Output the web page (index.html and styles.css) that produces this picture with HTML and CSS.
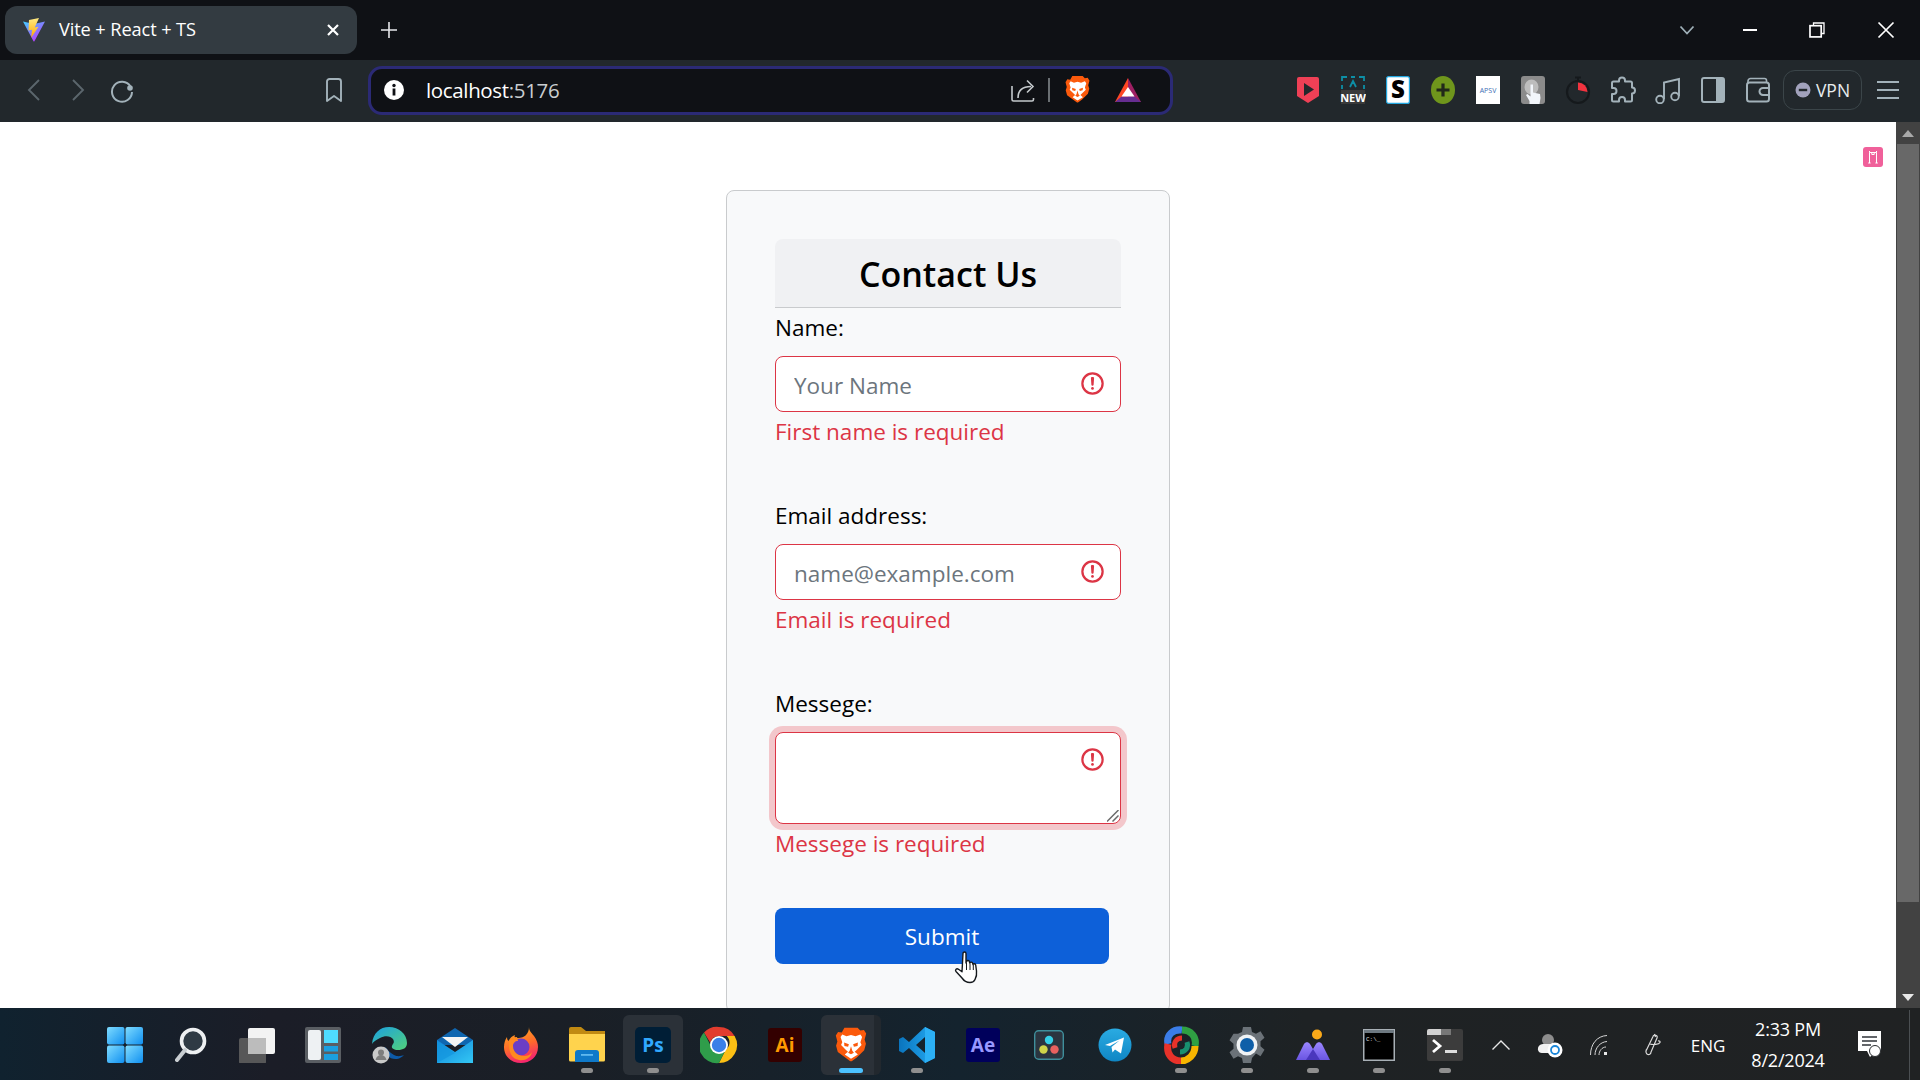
FILE: index.html
```html
<!DOCTYPE html>
<html lang="en">
<head>
<meta charset="utf-8">
<title>Vite + React + TS</title>
<link rel="stylesheet" href="styles.css">
</head>
<body>
<svg class="defs" width="0" height="0" aria-hidden="true">
  <defs>
    <linearGradient id="viteV" x1="0" y1="0" x2="0.7" y2="1"><stop offset="0" stop-color="#41d1ff"/><stop offset="1" stop-color="#bd34fe"/></linearGradient>
    <linearGradient id="viteB" x1="0" y1="0" x2="0" y2="1"><stop offset="0" stop-color="#ffea83"/><stop offset="1" stop-color="#ffa800"/></linearGradient>
    <linearGradient id="winG" x1="0" y1="0" x2="1" y2="1"><stop offset="0" stop-color="#7fdcff"/><stop offset="1" stop-color="#0f8ff0"/></linearGradient>
    <linearGradient id="edgeG" x1="0" y1="0" x2="1" y2="1"><stop offset="0" stop-color="#1ba1e2"/><stop offset="1" stop-color="#52d17a"/></linearGradient>
    <linearGradient id="mailG" x1="0" y1="0" x2="1" y2="1"><stop offset="0" stop-color="#0f83d8"/><stop offset="1" stop-color="#34c8f5"/></linearGradient>
    <linearGradient id="ffG" x1="0" y1="0" x2="0.3" y2="1"><stop offset="0" stop-color="#ffb51f"/><stop offset="0.6" stop-color="#ff6a2b"/><stop offset="1" stop-color="#f5296b"/></linearGradient>
    <linearGradient id="vpG" x1="0" y1="0" x2="1" y2="0"><stop offset="0" stop-color="#0a74bd"/><stop offset="1" stop-color="#23a9f2"/></linearGradient>
    <linearGradient id="monG" x1="0" y1="0" x2="0" y2="1"><stop offset="0" stop-color="#9a86ff"/><stop offset="1" stop-color="#6a55e2"/></linearGradient>
    <linearGradient id="tgG" x1="0" y1="0" x2="0" y2="1"><stop offset="0" stop-color="#2aabe2"/><stop offset="1" stop-color="#0f86c4"/></linearGradient>
    <symbol id="brave" viewBox="0 0 24 28">
      <path fill="#fb5a0c" d="M7 .5h10l2 2.200 2.800-.5 1.700 2.800-1.200 4.500 1 3.200-1.300 4.800-5.600 5.500-3.600 2.700c-.5.4-1.100.4-1.600 0l-3.600-2.700L2 19 .7 14.200l1-3.200L.5 6.500 2.200 3.700 5 4.200z"/>
      <path fill="#fff" d="M12 6l3.400 1 3.700-1.300 1.300 1.800-1.300 4 .9 2.200-3.500 3.500-1.700 1.600 2.400 2.100L12 24l-4.700-3.100 2.400-2.100-1.700-1.600-3.500-3.500.9-2.200-1.300-4 1.300-1.800L8.600 7z"/>
      <path fill="#fb5a0c" d="M6.800 11.800 10.400 13l-.6 2L7 14.300zM17.200 11.800 13.600 13l.6 2 2.800-.7zM12 14.500l1 3.500 1.200 1.500-2.200 1.200-2.200-1.200 1.200-1.500z"/>
    </symbol>
  </defs>
</svg>

<header class="tabstrip">
  <div class="tab">
    <svg class="tab-fav" width="24" height="24" viewBox="0 0 24 24"><path fill="url(#viteV)" d="M1 3.500 12 6l11-2.500L12.400 23.300a.5.5 0 0 1-.9 0z"/><path fill="url(#viteB)" d="M17 0 7 2l-.5 10.500 3.500-.7-.8 8 7.300-11-3.800.7z"/></svg>
    <span class="tab-title">Vite + React + TS</span>
    <svg class="tab-x" width="14" height="14" viewBox="0 0 14 14"><path d="M2 2l10 10M12 2 2 12" stroke="#fff" stroke-width="2.200"/></svg>
  </div>
  <div class="new-tab"><svg width="18" height="18" viewBox="0 0 18 18"><path d="M9 1v16M1 9h16" stroke="#e6e8ea" stroke-width="1.600"/></svg></div>
  <div class="strip-fill"></div>
  <div class="win-chev"><svg width="16" height="10" viewBox="0 0 16 10"><path d="M1.500 1.500 8 8.500l6.500-7" fill="none" stroke="#9fb0b8" stroke-width="1.800"/></svg></div>
  <div class="win-btn win-min"><svg width="16" height="16" viewBox="0 0 16 16"><path d="M1 8h14" stroke="#fff" stroke-width="2"/></svg></div>
  <div class="win-btn win-max"><svg width="16" height="16" viewBox="0 0 16 16"><path d="M4.500 3.500V1h10.500v10.500h-2.500" fill="none" stroke="#fff" stroke-width="1.300"/><rect x="1" y="3.700" width="11.200" height="11.200" fill="none" stroke="#fff" stroke-width="1.700"/></svg></div>
  <div class="win-btn win-close"><svg width="18" height="18" viewBox="0 0 18 18"><path d="M1.500 1.500l15 15M16.500 1.500l-15 15" stroke="#fff" stroke-width="1.700"/></svg></div>
</header>

<nav class="toolbar">
  <div class="slot"><svg width="16" height="26" viewBox="0 0 16 26"><path d="M13 3 3 13l10 10" fill="none" stroke="#5b666d" stroke-width="1.900"/></svg></div>
  <div class="slot"><svg width="16" height="26" viewBox="0 0 16 26"><path d="M3 3l10 10L3 23" fill="none" stroke="#5b666d" stroke-width="1.900"/></svg></div>
  <div class="slot"><svg width="26" height="26" viewBox="0 0 26 26"><path d="M21.500 9.500A10 10 0 1 0 23 15" fill="none" stroke="#a3b2ba" stroke-width="2"/><circle cx="21" cy="11" r="2.800" fill="#a3b2ba"/></svg></div>
  <div class="slot bookmark"><svg width="20" height="26" viewBox="0 0 20 26"><path d="M3 24V4.500a2.500 2.500 0 0 1 2.500-2.500h9a2.500 2.500 0 0 1 2.500 2.500V24l-7-5z" fill="none" stroke="#a3b2ba" stroke-width="1.900" stroke-linejoin="round"/></svg></div>
  <div class="address">
    <svg class="addr-info" width="22" height="22" viewBox="0 0 22 22"><circle cx="11" cy="11" r="10" fill="#fff"/><rect x="9.600" y="9.500" width="2.800" height="7" fill="#0f1115"/><circle cx="11" cy="6.500" r="1.700" fill="#0f1115"/></svg>
    <span class="url"><span class="url-host">localhost</span><span class="url-port">:5176</span></span>
    <svg class="addr-share" width="26" height="26" viewBox="0 0 26 26"><path d="M2 9v13.500c0 1 .6 1.500 1.500 1.500H22c1 0 1.500-.5 1.500-1.500V21" fill="none" stroke="#c4c9cc" stroke-width="1.600"/><path d="M8 21c0-8 4-11.500 13-11.500M17 3.500l6 6-6 6" fill="none" stroke="#c4c9cc" stroke-width="1.600"/></svg>
    <span class="addr-sep"></span>
    <svg class="addr-brave" width="25" height="30" viewBox="0 0 24 28"><use href="#brave"/></svg>
    <svg class="addr-bat" width="28" height="26" viewBox="0 0 28 26"><path fill="#ff4724" d="M14 1 1 25h13z"/><path fill="#9e1f63" d="M14 1l13 24H14z"/><path fill="#662d91" d="M1 25l6.500-5.500h13L27 25z"/><path fill="#fff" d="M14 10 7.500 19.500h13z"/></svg>
  </div>

  <div class="slot ext-first"><svg width="24" height="28" viewBox="0 0 24 28"><path fill="#ef4056" d="M3 1h18a2 2 0 0 1 2 2v17l-11 7L1 20V3a2 2 0 0 1 2-2z"/><path fill="#23282c" d="M8 7l10 6.500L8 20z"/></svg></div>
  <div class="slot"><svg width="26" height="30" viewBox="0 0 26 30"><rect x="1" y="15" width="24" height="14" fill="#3a3a3a"/><path d="M2 6V2h5M11 2h4M19 2h5v4M2 10v4M24 10v4M10 12l3-6 3 6" fill="none" stroke="#0d8fa6" stroke-width="1.800"/><text class="ext-new" x="13" y="26.500" text-anchor="middle">NEW</text></svg></div>
  <div class="slot"><svg class="ext-s-icon" width="24" height="28" viewBox="0 0 24 28"><rect x=".6" y=".6" width="22.800" height="26.800" rx="2" fill="#fff" stroke="#22a7e0" stroke-width="1.200"/><text class="ext-s" x="12" y="22" text-anchor="middle">S</text></svg></div>
  <div class="slot"><svg width="24" height="28" viewBox="0 0 24 28"><ellipse cx="12" cy="14" rx="12" ry="14" fill="#6f961c"/><path d="M12 7.500v13M5.500 14h13" stroke="#22291a" stroke-width="3.200"/></svg></div>
  <div class="slot"><svg width="24" height="28" viewBox="0 0 24 28"><rect width="24" height="28" fill="#fff"/><text class="ext-apsv" x="12" y="16.500" text-anchor="middle">APSV</text></svg></div>
  <div class="slot"><svg width="24" height="28" viewBox="0 0 24 28"><rect width="24" height="28" rx="3" fill="#8b8b8b"/><ellipse cx="10.500" cy="11" rx="7" ry="7.500" fill="#bdbdbd"/><path fill="#f2f6fb" d="M8.500 28v-3L5 19l1.500-1 3 2.500V8.500h2.500v8l7 1.500.5 4-1 6z"/></svg></div>
  <div class="slot"><svg width="26" height="30" viewBox="0 0 26 30"><path d="M10 2.500h6M13 2.500v3" stroke="#15191c" stroke-width="2"/><circle cx="13" cy="17" r="11" fill="none" stroke="#15191c" stroke-width="2.200"/><path fill="#f2333f" d="M13 7.500A9.500 9.500 0 0 1 22.500 17L13 15z"/></svg></div>
  <div class="slot"><svg width="28" height="28" viewBox="0 0 28 28"><path d="M10 5.500V4.500a3 3 0 0 1 6 0v1h5.500A1.500 1.500 0 0 1 23 7v4.500a3 3 0 0 1 0 6V24a1.500 1.500 0 0 1-1.500 1.500H16V24a3 3 0 0 0-6 0v1.500H4.500A1.500 1.500 0 0 1 3 24v-6h1.500a3 3 0 0 0 0-6H3V7a1.500 1.500 0 0 1 1.500-1.500z" fill="none" stroke="#a3b2ba" stroke-width="2" stroke-linejoin="round"/></svg></div>
  <div class="slot"><svg width="26" height="28" viewBox="0 0 26 28"><path d="M9 23V6.500L24 3v17" fill="none" stroke="#a3b2ba" stroke-width="1.900"/><circle cx="5" cy="23.500" r="3.800" fill="none" stroke="#a3b2ba" stroke-width="1.900"/><circle cx="20" cy="20.500" r="3.800" fill="none" stroke="#a3b2ba" stroke-width="1.900"/></svg></div>
  <div class="slot"><svg width="24" height="26" viewBox="0 0 24 26"><rect x="1" y="1" width="22" height="24" rx="2" fill="none" stroke="#a3b2ba" stroke-width="2"/><rect x="15" y="1" width="8" height="24" fill="#a3b2ba"/></svg></div>
  <div class="slot"><svg width="24" height="26" viewBox="0 0 24 26"><path d="M2 6V4a2.500 2.500 0 0 1 2.500-2.500h14a2 2 0 0 1 2 2V6" fill="none" stroke="#a3b2ba" stroke-width="1.600"/><rect x="1" y="5.500" width="22" height="19" rx="2.500" fill="none" stroke="#a3b2ba" stroke-width="2"/><path d="M23 11h-6a3 3 0 0 0 0 7h6" fill="none" stroke="#a3b2ba" stroke-width="2"/></svg></div>
  <div class="vpn"><svg width="16" height="16" viewBox="0 0 16 16"><circle cx="8" cy="8" r="7.500" fill="#a2a2bc"/><rect x="3.800" y="6.800" width="8.400" height="2.400" fill="#22282c"/></svg><span>VPN</span></div>
  <div class="slot menu"><svg width="24" height="20" viewBox="0 0 24 20"><path d="M1 2h22M1 10h22M1 18h22" stroke="#a3b2ba" stroke-width="2"/></svg></div>
</nav>

<div class="viewport">
  <main class="page">
    <section class="card">
      <div class="card-head"><h1 class="card-title">Contact Us</h1></div>
      <form class="form">
        <div class="field">
          <label class="label" for="nm">Name:</label>
          <div class="control">
            <input class="input" id="nm" type="text" placeholder="Your Name">
            <svg class="alert" width="27" height="27" viewBox="0 0 12 12" fill="none" stroke="#dc3545"><circle cx="6" cy="6" r="4.500"/><path stroke-linejoin="round" d="M5.800 3.600h.4L6 6.500z"/><circle cx="6" cy="8.200" r=".6" fill="#dc3545" stroke="none"/></svg>
          </div>
          <div class="error">First name is required</div>
        </div>
        <div class="field">
          <label class="label" for="em">Email address:</label>
          <div class="control">
            <input class="input" id="em" type="email" placeholder="name@example.com">
            <svg class="alert" width="27" height="27" viewBox="0 0 12 12" fill="none" stroke="#dc3545"><circle cx="6" cy="6" r="4.500"/><path stroke-linejoin="round" d="M5.800 3.600h.4L6 6.500z"/><circle cx="6" cy="8.200" r=".6" fill="#dc3545" stroke="none"/></svg>
          </div>
          <div class="error">Email is required</div>
        </div>
        <div class="field">
          <label class="label" for="ms">Messege:</label>
          <div class="control">
            <textarea class="input textarea" id="ms"></textarea>
            <svg class="alert" width="27" height="27" viewBox="0 0 12 12" fill="none" stroke="#dc3545"><circle cx="6" cy="6" r="4.500"/><path stroke-linejoin="round" d="M5.800 3.600h.4L6 6.500z"/><circle cx="6" cy="8.200" r=".6" fill="#dc3545" stroke="none"/></svg>
            <svg class="grip" width="12" height="12" viewBox="0 0 12 12"><path d="M0 11.500 11.500 0M5.500 11.500l6-6" stroke="#6b6b6b" stroke-width="1.500"/></svg>
          </div>
          <div class="error">Messege is required</div>
        </div>
        <button class="submit" type="button">Submit</button>
      </form>
    </section>
    <div class="badge"><svg width="12" height="14" viewBox="0 0 12 14"><path d="M2.500 13V2.500h7V13M2.500 2.500V1M9.500 2.500V1M4.800 2.500v2h2.400v-2M1.200 13h2.400M8.400 13h2.400" fill="none" stroke="#fff" stroke-width="1"/></svg></div>
    <svg class="cursor" width="27" height="33" viewBox="0 0 27 33"><path fill="#fff" stroke="#14181c" stroke-width="1.400" stroke-linejoin="round" d="M10 2.500c0-2 3-2 3 0V12l.5-1.500c.5-1.500 3-1.200 3 .5l.3 1c.4-1.300 2.700-1.100 2.900.5l.3 1c.4-1.200 2.500-1 2.700.5l.8 6c.5 4-.4 6.500-1.500 8.500-.6 1.500-2 3-5 3-4 0-6-1.500-8-4.500l-6-6.500c-1.200-1.500.5-3.500 2.500-2.200l3.500 2.500z"/><path d="M13.500 12v7M17 12.500V19M20.300 14v5" stroke="#14181c" stroke-width="1"/></svg>
  </main>
  <aside class="scrollbar">
    <div class="sb-arrow"><svg width="12" height="7" viewBox="0 0 12 7"><path d="M6 0l6 7H0z" fill="#a9a9a9"/></svg></div>
    <div class="sb-thumb"></div>
    <div class="sb-rest"></div>
    <div class="sb-arrow sb-arrow-end"><svg width="12" height="7" viewBox="0 0 12 7"><path d="M6 7 0 0h12z" fill="#e8e8e8"/></svg></div>
  </aside>
</div>

<footer class="taskbar">
  <div class="apps">
    <div class="app"><svg width="36" height="36" viewBox="0 0 36 36"><rect x="0" y="0" width="17.500" height="17.500" rx="2" fill="url(#winG)"/><rect x="18.500" y="0" width="17.500" height="17.500" rx="2" fill="url(#winG)"/><rect x="0" y="18.500" width="17.500" height="17.500" rx="2" fill="url(#winG)"/><rect x="18.500" y="18.500" width="17.500" height="17.500" rx="2" fill="url(#winG)"/></svg></div>
    <div class="app"><svg width="32" height="36" viewBox="0 0 32 36"><circle cx="18" cy="14" r="11.500" fill="#2f3a44" stroke="#eef0f2" stroke-width="3.600"/><path d="M10 23 2 33" stroke="#c9ced2" stroke-width="4" stroke-linecap="round"/></svg></div>
    <div class="app"><svg width="36" height="36" viewBox="0 0 36 36"><rect x="9" y="1" width="27" height="26" rx="2" fill="#f3f3f3"/><rect x="0" y="11" width="27" height="26" rx="2" fill="#5c5c5c" fill-opacity=".92"/><rect x="9" y="11" width="18" height="16" fill="#bcbcbc"/></svg></div>
    <div class="app"><svg width="36" height="36" viewBox="0 0 36 36"><rect width="36" height="36" rx="2" fill="#5a5e63"/><rect x="3" y="3" width="13" height="30" rx="2" fill="#eef1f3"/><rect x="19" y="3" width="14" height="13" fill="#4fdcff"/><rect x="19" y="19" width="14" height="5.500" fill="#1b9fe0"/><rect x="19" y="27" width="14" height="6" fill="#1b9fe0"/></svg></div>
    <div class="app"><svg width="36" height="38" viewBox="0 0 36 38"><path fill="url(#edgeG)" d="M1 18C2 7 9 1 18 1c10 0 18 7 18 16 0 5-4 7-9 7-4 0-7-2-6-4 1-3 3-3 1-7-2-3-8-4-13-1-4 2-7 4-8 6z"/><path fill="#0d5aa8" d="M14 21c-1 7 5 13 12 12 3-.5 5-2 7-4-3 1-6 2-10 0-4-2-6-5-9-8z"/><circle cx="10" cy="29" r="8.500" fill="#c9c9c9"/><circle cx="10" cy="26.500" r="3" fill="#7d7d7d"/><path d="M4.500 34c.8-3.500 3-5 5.500-5s4.700 1.500 5.500 5" fill="#7d7d7d"/></svg></div>
    <div class="app"><svg width="36" height="36" viewBox="0 0 36 36"><path fill="#0f66b0" d="M0 13 18 1l18 12v5H0z"/><path fill="#f4f4f4" d="M5 10h26L18 20z"/><path fill="url(#mailG)" d="M0 13l18 12 18-12v23H0z"/><path fill="#1296de" d="M0 36V14l18 12z" fill-opacity=".7"/></svg></div>
    <div class="app"><svg width="36" height="38" viewBox="0 0 36 38"><path fill="url(#ffG)" d="M26 1c0 4 2 5 5 9 3 4 4 8 4 11 0 10-8 16-17 16S1 31 1 21c0-4 1-7 3-10 0 2 .5 3 1.500 4C7 12 9 10 12 9c-1 2 0 3 2 3 5 0 7-1 9-3 2-2 3-5 3-8z"/><circle cx="18" cy="21" r="8.500" fill="#6a3ec4"/><path fill="#ff8a1f" d="M6 15c2-3 5-4 8-4l1 4c-3 0-5 2-5 5 0 6 5 10 11 10 3 0 6-1 8-4-1 6-7 9-13 8-7-1-11-8-10-19z"/></svg></div>
    <div class="app has-dot"><svg width="36" height="38" viewBox="0 0 36 38"><path fill="#c18a12" d="M0 3a2 2 0 0 1 2-2h10l5 4h19v8H0z"/><path fill="#ffd34d" d="M0 8h36v26a1.500 1.500 0 0 1-1.500 1.500h-33A1.500 1.500 0 0 1 0 34z"/><path fill="#0f79c9" d="M6 36V27a3 3 0 0 1 3-3h18a3 3 0 0 1 3 3v9z"/><rect x="12" y="28" width="12" height="1.800" fill="#60b8ef"/></svg><i class="dot"></i></div>
    <div class="app active has-dot"><svg width="36" height="36" viewBox="0 0 36 36"><rect width="36" height="36" rx="5" fill="#001e36"/><text class="app-ps" x="18" y="25" text-anchor="middle">Ps</text></svg><i class="dot"></i></div>
    <div class="app"><svg width="38" height="38" viewBox="0 0 38 38"><path fill="#e23c2e" d="M19 1a18 18 0 0 1 15.600 9H19a9 9 0 0 0-8.700 6.700L4 6.500A18 18 0 0 1 19 1z"/><path fill="#fbbf14" d="M34.600 10A18 18 0 0 1 19 37l6.500-13a9 9 0 0 0 1.200-14z"/><path fill="#2f9d4a" d="M4 6.500A18 18 0 0 0 19 37l6.500-13A9 9 0 0 1 10.300 19z"/><circle cx="19" cy="19" r="9" fill="#fff"/><circle cx="19" cy="19" r="7.200" fill="#3a7fe8"/></svg></div>
    <div class="app"><svg width="34" height="34" viewBox="0 0 34 34"><rect width="34" height="34" rx="3" fill="#300"/><text class="app-ai" x="17" y="24" text-anchor="middle">Ai</text></svg></div>
    <div class="app active stacked has-dot"><svg class="brave-task" width="32" height="37" viewBox="0 0 24 28"><use href="#brave"/></svg><i class="dot dot-on"></i></div>
    <div class="app has-dot"><svg width="36" height="38" viewBox="0 0 36 38"><path fill="url(#vpG)" d="M26 1 36 6v26l-10 5-16-15-6 5-4-2v-12l4-2 6 5zM26 11l-9 8 9 8z"/><path fill="#2cb0f5" d="M26 1 36 6v26l-10 5z"/></svg><i class="dot"></i></div>
    <div class="app"><svg width="34" height="34" viewBox="0 0 34 34"><rect width="34" height="34" rx="3" fill="#00005b"/><text class="app-ae" x="17" y="24" text-anchor="middle">Ae</text></svg></div>
    <div class="app"><svg width="30" height="30" viewBox="0 0 30 30"><rect x=".7" y=".7" width="28.600" height="28.600" rx="4" fill="#2b3540" stroke="#3f8f9c" stroke-width="1.400"/><circle cx="15" cy="10" r="4.200" fill="#35cfe6"/><circle cx="9.500" cy="19.500" r="4.200" fill="#cfd54a"/><circle cx="20.500" cy="19.500" r="4.200" fill="#e8615f"/></svg></div>
    <div class="app"><svg width="34" height="34" viewBox="0 0 34 34"><circle cx="17" cy="17" r="16.500" fill="url(#tgG)"/><path fill="#fff" d="M7 17 26 9.500 23 25.500l-6-4-2.500 3-1-5.500 8-6.500-9.500 5.500z"/></svg></div>
    <div class="app has-dot"><svg width="36" height="38" viewBox="0 0 36 38"><path d="M5 18C3 9 10 3 19 4" fill="none" stroke="#3b7de8" stroke-width="7"/><path d="M19 4c9 0 15 7 13 16" fill="none" stroke="#2fa043" stroke-width="7"/><path d="M32 20c0 9-7 15-14 15" fill="none" stroke="#f7b500" stroke-width="7"/><path d="M18 35C9 35 3 28 5 18" fill="none" stroke="#e8322a" stroke-width="7"/><path d="M12 22c-2-6 2-10 7-10" fill="none" stroke="#e8322a" stroke-width="5"/><path d="M24 16c2 6-2 10-7 10" fill="none" stroke="#18906f" stroke-width="5"/></svg><i class="dot"></i></div>
    <div class="app has-dot"><svg width="36" height="36" viewBox="0 0 36 36"><path fill="#6b7278" d="M14 0h8l1 5 4 1.800 4.500-2.600 4 6.500-4 3.500v5l4 3.500-4 6.500-4.500-2.600L23 31l-1 5h-8l-1-5-4-1.800-4.500 2.600-4-6.500 4-3.500v-5l-4-3.500 4-6.500L9 6.800 13 5z"/><circle cx="18" cy="18" r="10.500" fill="#f0f3f5"/><circle cx="18" cy="18" r="7" fill="#0f5fa8"/></svg><i class="dot"></i></div>
    <div class="app has-dot"><svg width="34" height="32" viewBox="0 0 34 32"><path fill="url(#monG)" d="M0 31 8 15c1.500-2.500 4.500-2.500 6 0l3 5 3-5c1.500-2.500 4.500-2.500 6 0l8 16z"/><path fill="#4a37bd" d="M10 31l7-11 7 11z"/><circle cx="21" cy="5.500" r="5" fill="#fba919"/></svg><i class="dot"></i></div>
    <div class="app has-dot"><svg width="32" height="32" viewBox="0 0 32 32"><rect width="32" height="32" fill="#a8b0b6"/><rect x="1" y="1" width="30" height="3" fill="#6d7880"/><rect x="1.500" y="4" width="29" height="26.500" fill="#000"/><text class="app-cmd" x="3" y="12">C:\_</text></svg><i class="dot"></i></div>
    <div class="app has-dot"><svg width="36" height="32" viewBox="0 0 36 32"><rect width="36" height="32" rx="2" fill="#3c3c3c"/><path d="M0 2a2 2 0 0 1 2-2h12v6H0z" fill="#d0d0d0"/><path d="M14 0h10v6H14z" fill="#777"/><path d="M6 11l7 6-7 6" fill="none" stroke="#fff" stroke-width="2.800"/><rect x="18" y="21" width="12" height="3" fill="#ddd"/></svg><i class="dot"></i></div>
  </div>
  <div class="tray">
    <div class="tray-i tray-chev"><svg width="20" height="12" viewBox="0 0 20 12"><path d="M1.500 10.500 10 2l8.500 8.500" fill="none" stroke="#e8e8e8" stroke-width="1.400"/></svg></div>
    <div class="tray-i tray-cloud"><svg width="26" height="26" viewBox="0 0 26 26"><circle cx="11" cy="8" r="6" fill="#8d8d8d"/><path fill="#f1f1f1" d="M1 18a5 5 0 0 1 5-6h10v9H5a4 4 0 0 1-4-3z"/><circle cx="18" cy="18" r="7.500" fill="#fff"/><circle cx="18" cy="18" r="4" fill="none" stroke="#1b86d8" stroke-width="1.800"/></svg></div>
    <div class="tray-i tray-wifi"><svg width="20" height="22" viewBox="0 0 20 22"><path d="M1.500 21C1.500 10 8 2 18 1.500M6 21c0-7 5-13 12-13.500M10 21c0-4 3-8 7-8" fill="none" stroke="#d6d6d6" stroke-width="1"/><rect x="15" y="18" width="3" height="3" fill="#e8e8e8"/></svg></div>
    <div class="tray-i tray-pen"><svg width="20" height="24" viewBox="0 0 20 24"><path d="M11 3.500 5 16a3.500 3.500 0 0 0 0 5c2 1.500 4 0 4-2l6-14a2 2 0 0 0-4-1.500zM12.500 1l1 3M8 11c3 1 9 .5 10-1.500.5-1-.5-2-2-1.500" fill="none" stroke="#dcdcdc" stroke-width="1.200"/></svg></div>
    <div class="tray-lang">ENG</div>
    <div class="tray-clock"><span>2:33 PM</span><span>8/2/2024</span></div>
    <div class="tray-note"><svg width="24" height="28" viewBox="0 0 24 28"><path fill="#fff" d="M0 0h23v20h-5l-6 6-3-6H0z"/><path d="M4 6h15M4 10h15M4 14h9" stroke="#30343a" stroke-width="1.400"/><circle cx="17" cy="20" r="5.500" fill="#fff" stroke="#2a2d30" stroke-width="1"/></svg></div>
    <div class="tray-edge"></div>
  </div>
</footer>
</body>
</html>
```

FILE: styles.css
```css
* { box-sizing: border-box; }
html, body { margin: 0; height: 100%; }
body {
  width: 1920px;
  height: 1080px;
  overflow: hidden;
  display: flex;
  flex-direction: column;
  font-family: "Open Sans", "Noto Sans", sans-serif;
  background: #fff;
}
.defs { position: absolute; }

/* tab strip */
.tabstrip {
  height: 60px;
  flex: none;
  display: flex;
  align-items: flex-start;
  padding: 6px 0 0 5px;
  background: #0f1115;
}
.tab {
  width: 352px;
  height: 48px;
  display: flex;
  align-items: center;
  padding: 0 17px 0 17px;
  background: #333b41;
  border-radius: 12px;
}
.tab-title { flex: 1; margin: 0 0 2px 13px; color: #fff; font-size: 18.2px; letter-spacing: -.1px; }
.new-tab { width: 64px; height: 48px; display: flex; align-items: center; justify-content: center; }
.strip-fill { flex: 1; }
.win-chev { width: 60px; height: 48px; margin-right: -1px; display: flex; align-items: center; justify-content: center; }
.win-btn { height: 48px; display: flex; align-items: center; justify-content: center; }
.win-min { width: 67px; }
.win-max { width: 68px; }
.win-close { width: 69px; }

/* toolbar */
.toolbar {
  height: 62px;
  flex: none;
  display: flex;
  align-items: center;
  padding: 0 0 2px 12px;
  background: #22282c;
}
.slot { width: 44px; height: 44px; flex: none; display: flex; align-items: center; justify-content: center; }
.bookmark { margin-left: 168px; }
.address {
  width: 805px;
  height: 49px;
  margin-left: 12px;
  flex: none;
  display: flex;
  align-items: center;
  padding: 0 28px 0 12px;
  background: #0f1115;
  border: 3px solid #2b2a75;
  border-radius: 14px;
}
.url { flex: 1; margin-left: 21px; font-size: 20.5px; letter-spacing: -.35px; color: #fff; }
.url-port { color: #c9cdd0; }
.addr-sep { width: 2px; height: 24px; margin: 0 15px 0 12px; background: #6a6f73; }
.addr-bat { margin-left: 24px; }
.toolbar .ext-first { width: 45px; margin-left: 112px; }
.toolbar .ext-first ~ .slot { width: 45px; }
.vpn {
  width: 79px;
  height: 40px;
  flex: none;
  margin-left: 3px;
  display: flex;
  align-items: center;
  justify-content: center;
  gap: 5px;
  border: 1.5px solid #3b4549;
  border-radius: 12px;
  color: #e8ecee;
  font-size: 17.5px;
}
.toolbar .menu { width: 44px; margin-left: 3px; }
.ext-new { font: 700 11px "Open Sans", sans-serif; fill: #fff; }
.ext-s-icon { overflow: visible; }
.ext-s { font: 800 24px "Open Sans", sans-serif; fill: #000; }
.ext-apsv { font: 400 7px "Open Sans", sans-serif; fill: #3c6fb5; }

/* page */
.viewport { flex: 1; min-height: 0; display: flex; }
.page {
  position: relative;
  flex: 1;
  min-width: 0;
  overflow: hidden;
  display: flex;
  justify-content: center;
  align-items: flex-start;
  padding-top: 68px;
  background: #fff;
}
.card {
  width: 444px;
  flex: none;
  padding: 48px;
  background: #f8f9fa;
  border: 1.5px solid #c9cbcd;
  border-radius: 8px;
}
.card-head {
  height: 69px;
  display: flex;
  align-items: center;
  justify-content: center;
  background: #f0f1f3;
  border-bottom: 1.5px solid #c9cbcd;
  border-radius: 8px 8px 0 0;
}
.card-title { margin: 2px 0 0; font-size: 34px; font-weight: 600; line-height: 38px; color: #000; }
.field { margin-bottom: 46px; }
.label { display: block; height: 36px; margin-bottom: 12px; font-size: 22.5px; line-height: 39px; color: #000; }
.control { position: relative; }
.input {
  display: block;
  width: 100%;
  height: 56px;
  padding: 3px 54px 0 18px;
  background: #fff;
  border: 1.5px solid #dc3545;
  border-radius: 8px;
  outline: 0;
  font-family: inherit;
  font-size: 22.5px;
  color: #212529;
}
.input::placeholder { color: #6c757d; opacity: 1; }
.textarea { height: 92px; resize: none; box-shadow: 0 0 0 6px #f3c7cb; }
.alert { position: absolute; right: 15px; top: 14px; }
.grip { position: absolute; right: 2px; bottom: 2px; pointer-events: none; }
.error { margin-top: 2px; height: 36px; font-size: 22.5px; line-height: 36px; color: #dc3545; }
.submit {
  display: block;
  width: 334px;
  height: 56px;
  padding: 1px 0 0;
  background: #0d60d9;
  border: 0;
  border-radius: 8px;
  color: #fff;
  font-family: inherit;
  font-size: 22.5px;
}
.badge {
  position: absolute;
  left: 1863px;
  top: 25px;
  width: 20px;
  height: 20px;
  display: flex;
  align-items: center;
  justify-content: center;
  background: #f0609a;
  border-radius: 3px;
}
.cursor { position: absolute; left: 953px; top: 829px; }

/* scrollbar */
.scrollbar { width: 24px; flex: none; display: flex; flex-direction: column; background: #424242; }
.sb-arrow { height: 22px; flex: none; display: flex; align-items: center; justify-content: center; }
.sb-thumb { height: 758px; flex: none; margin: 0 1px 0 1px; background: #686868; }
.sb-rest { flex: 1; }

/* taskbar */
.taskbar {
  height: 72px;
  flex: none;
  display: flex;
  align-items: center;
  padding: 2px 0 0 92px;
  background: linear-gradient(90deg, #10222f 0%, #1b1d27 14%, #1a1f26 30%, #14232e 50%, #1e2224 68%, #202223 100%);
}
.apps { display: flex; align-items: center; }
.app {
  position: relative;
  width: 60px;
  height: 60px;
  margin: 0 3px;
  display: flex;
  align-items: center;
  justify-content: center;
  border-radius: 6px;
}
.app.active { background: #2b3138; }
.app.stacked { background: linear-gradient(90deg, #2b3138 88%, #22282e 88%); }
.dot {
  position: absolute;
  left: 50%;
  bottom: 2px;
  width: 12px;
  height: 5px;
  margin-left: -6px;
  background: #8f8f8f;
  border-radius: 3px;
}
.dot-on { width: 24px; margin-left: -12px; background: #4cc2ff; }
.app-ps, .app-ai, .app-ae { font: 700 19px "Open Sans", sans-serif; }
.app-ps { fill: #31a8ff; }
.app-ai { fill: #ff9a00; }
.app-ae { fill: #9999ff; }
.app-cmd { font: 400 6px "Liberation Mono", monospace; fill: #ddd; }
.tray { flex: 1; display: flex; align-items: center; height: 100%; color: #fff; }
.tray-i { display: flex; align-items: center; justify-content: center; width: 40px; height: 40px; flex: none; }
.tray-chev { margin-left: 3px; }
.tray-cloud { margin-left: 9px; }
.tray-wifi { margin-left: 9px; }
.tray-pen { margin-left: 13px; }
.tray-lang { width: 60px; margin-left: 6px; text-align: center; font-size: 17px; }
.tray-clock { width: 100px; display: flex; flex-direction: column; align-items: center; gap: 10px; font-size: 18px; line-height: 21px; letter-spacing: -.2px; }
.tray-note { width: 60px; margin-left: 2px; display: flex; justify-content: center; }
.tray-edge { width: 1px; height: 100%; margin-left: 9px; background: #4b4f52; }
```
